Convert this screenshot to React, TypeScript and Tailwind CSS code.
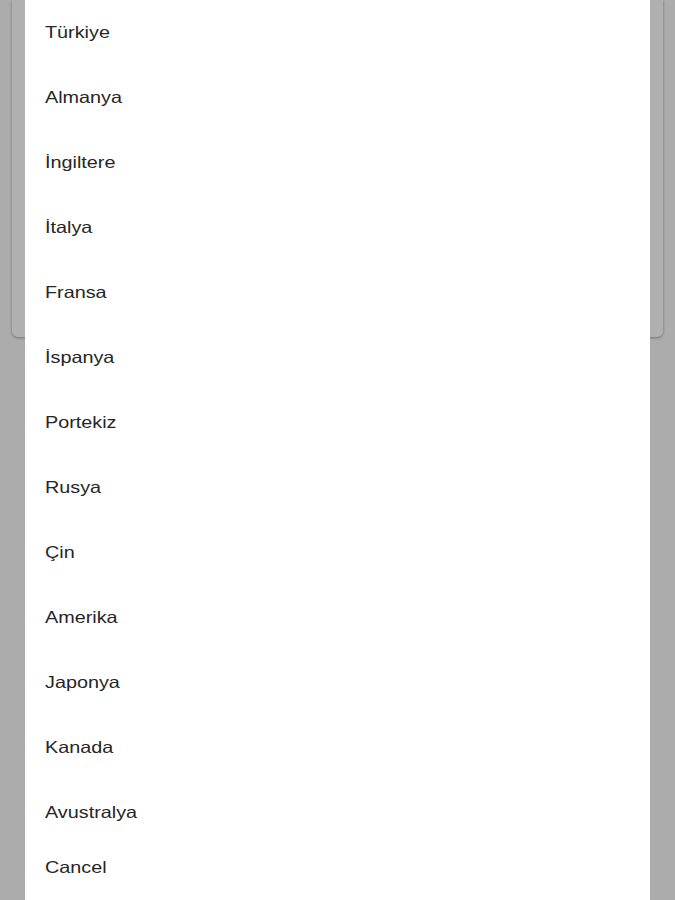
import React from 'react';

const countries: string[] = [
  'Türkiye',
  'Almanya',
  'İngiltere',
  'İtalya',
  'Fransa',
  'İspanya',
  'Portekiz',
  'Rusya',
  'Çin',
  'Amerika',
  'Japonya',
  'Kanada',
  'Avustralya',
];

const App: React.FC = () => {
  return (
    <div className="relative h-[900px] w-[675px] overflow-hidden bg-[#fafafa] font-['Liberation_Sans',Arial,sans-serif]">
      {/* page card behind the dialog */}
      <div className="px-3">
        <div className="h-[337px] rounded-b-md bg-white shadow-[0_1px_3px_rgba(0,0,0,0.35)]" />
      </div>

      {/* backdrop */}
      <div className="absolute inset-0 bg-black/[0.31]" />

      {/* picker dialog */}
      <div className="absolute top-0 bottom-0 left-[25px] w-[625px] bg-white">
        <ul>
          {countries.map((c) => (
            <li key={c} className="flex h-[65px] items-center pl-[20px] text-[16.5px] text-[#262626]">
              <span className="inline-block origin-left scale-x-[1.2]">{c}</span>
            </li>
          ))}
        </ul>
        <button className="flex h-[45px] items-center pl-[20px] text-[16.5px] text-[#262626]">
          <span className="inline-block origin-left scale-x-[1.2]">Cancel</span>
        </button>
      </div>
    </div>
  );
};

export default App;
